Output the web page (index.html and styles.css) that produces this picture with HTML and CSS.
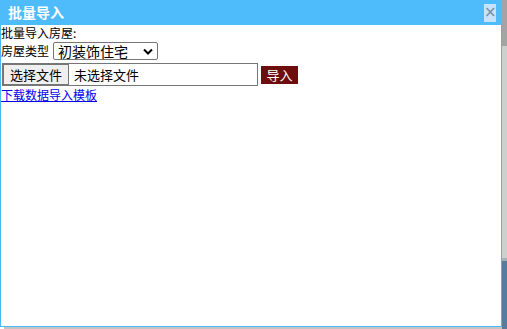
FILE: index.html
```html
<!DOCTYPE html>
<html lang="zh">
<head>
<meta charset="utf-8">
<link rel="stylesheet" href="styles.css">
</head>
<body>
<div class="page">
  <div class="col">
    <div class="dialog">
      <div class="titlebar">
        <span class="title">批量导入</span>
        <span class="close">×</span>
      </div>
      <div class="body">
        <div class="line">批量导入房屋:</div>
        <div class="line row">
          <span>房屋类型</span>
          <div class="sel">
            <span class="seltext">初装饰住宅</span>
            <svg class="chev" width="10" height="7" viewBox="0 0 10 7"><path d="M1 1.5 L5 5.5 L9 1.5" fill="none" stroke="#000" stroke-width="2"/></svg>
          </div>
        </div>
        <div class="row filerow">
          <div class="file">
            <span class="filebtn">选择文件</span>
            <span class="filename">未选择文件</span>
          </div>
          <span class="import">导入</span>
        </div>
        <a class="link" href="#">下载数据导入模板</a>
      </div>
    </div>
    <div class="shadow"></div>
  </div>
  <div class="side">
    <div class="thumb"></div>
    <div class="track"></div>
    <div class="band"></div>
    <div class="blue"></div>
  </div>
</div>
</body>
</html>
```

FILE: styles.css
```css
html, body { margin: 0; padding: 0; background: #fff; }
body { font-family: "Noto Sans CJK SC", "Microsoft YaHei", sans-serif; font-size: 12px; color: #000; }
.page { display: flex; width: 507px; height: 329px; overflow: hidden; }
.col { display: flex; flex-direction: column; width: 502px; }
.dialog {
  width: 502px; height: 327px; box-sizing: border-box;
  border: 1px solid #4ab8f7; border-top: none; background: #fff;
  display: flex; flex-direction: column;
}
.titlebar {
  height: 25px; background: #4ebbfb; margin: 0 -1px;
  display: flex; align-items: center; justify-content: space-between;
  padding: 0 6px 0 8px;
}
.title { color: #fff; font-weight: bold; font-size: 14px; line-height: 25px; }
.close {
  width: 12px; height: 18px; background: #c6e3fb; color: #7a8a99;
  font-size: 15px; line-height: 17px; text-align: center; font-family: "DejaVu Sans", sans-serif;
}
.body { padding: 1px 0 0 0; display: flex; flex-direction: column; align-items: flex-start; }
.line { line-height: 14px; height: 14px; }
.row { display: flex; align-items: center; }
.line.row { height: 20px; margin-top: 1px; }
.sel {
  margin-left: 4px; width: 105px; height: 18px; box-sizing: border-box;
  border: 1px solid #767676; border-radius: 2px; background: #fff;
  display: flex; align-items: center; justify-content: space-between;
  padding: 0 4px 0 4px;
}
.seltext { font-size: 14px; line-height: 16px; }
.chev { display: block; }
.filerow { margin-top: 2px; }
.file {
  width: 254px; height: 21px; border: 1px solid #767676;
  display: flex; align-items: stretch; margin-left: 1px;
}
.filebtn {
  width: 66px; box-sizing: border-box; border: 1px solid #767676; background: #efefef;
  font-size: 13px; text-align: center; line-height: 19px; margin: 0;
}
.filename { font-size: 13px; line-height: 21px; padding-left: 5px; }
.import {
  margin-left: 3px; width: 37px; height: 18px; background: #6e0d0d; color: #fff;
  font-size: 13px; line-height: 18px; text-align: center;
}
.link { color: #0000ee; text-decoration: underline; font-size: 12px; line-height: 14px; margin-top: 2px; }
.shadow { height: 2px; margin-left: 4px; background: #c4c4c4; }
.side { width: 5px; display: flex; flex-direction: column; background: #d2d2d2; }
.thumb { height: 46px; background: #a4a4a4; }
.track { height: 212px; background: #cfcfcf; }
.band { height: 3px; background: #a8b0b8; }
.blue { flex: 1; background: #5b7b9c; }
```
